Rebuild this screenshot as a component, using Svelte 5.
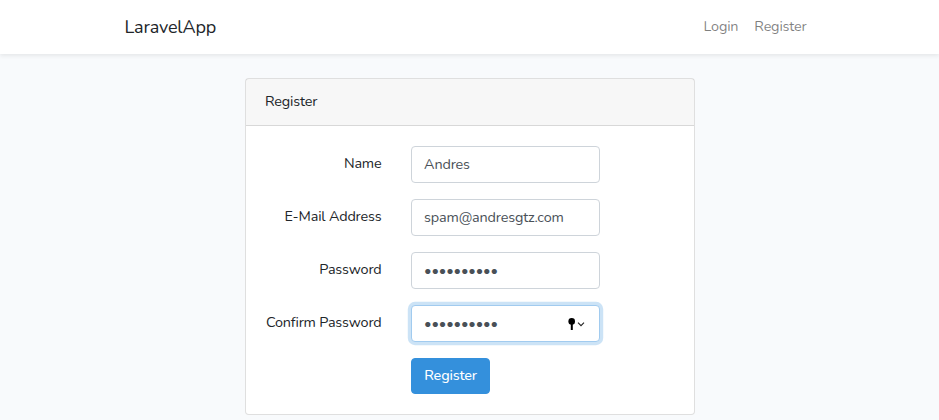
<script>
  // Register form fields
  let fields = [
    { label: "Name", type: "text", value: "Andres" },
    { label: "E-Mail Address", type: "email", value: "spam@andresgtz.com" },
    { label: "Password", type: "password", value: "secret1234" },
    { label: "Confirm Password", type: "password", value: "secret1234", focused: true }
  ];
</script>

<nav>
  <div class="container nav-inner">
    <a class="brand" href="#home">LaravelApp</a>
    <ul>
      <li><a href="#login">Login</a></li>
      <li><a href="#register">Register</a></li>
    </ul>
  </div>
</nav>

<main>
  <div class="card">
    <div class="card-header">Register</div>
    <form class="card-body" on:submit|preventDefault>
      {#each fields as field}
        <div class="row">
          <label for={field.label}>{field.label}</label>
          <div class="control">
            <input id={field.label} type={field.type} value={field.value} class:focused={field.focused} />
            {#if field.focused}
              <svg class="key" width="18" height="14" viewBox="0 0 18 14" aria-hidden="true">
                <circle cx="3.7" cy="4.4" r="3.3" fill="#000" />
                <rect x="2.8" y="6" width="2" height="7" fill="#000" />
                <path d="M10 5.7 L13 8.7 L16 5.7" fill="none" stroke="#222" stroke-width="1.1" />
              </svg>
            {/if}
          </div>
        </div>
      {/each}
      <div class="row last">
        <div class="spacer"></div>
        <button type="submit">Register</button>
      </div>
    </form>
  </div>
</main>

<style>
  :global(body) {
    background: #f8fafc;
    color: #212529;
    font-family: "Nunito", "Noto Sans", sans-serif;
    font-size: 14.4px;
    line-height: 1.6;
    letter-spacing: -0.17px;
  }

  nav {
    background: #fff;
    height: 54px;
    box-shadow: 0 2px 4px rgba(0, 0, 0, 0.075);
  }

  .container {
    width: 690px;
    margin: 0 auto;
  }

  .nav-inner {
    display: flex;
    align-items: center;
    justify-content: space-between;
    height: 100%;
  }

  .brand {
    font-size: 18px;
    color: #212529;
    text-decoration: none;
  }

  ul {
    display: flex;
    list-style: none;
    margin: 0;
    padding: 0;
  }

  ul a {
    display: block;
    padding: 8px;
    color: rgba(0, 0, 0, 0.5);
    text-decoration: none;
  }

  main {
    padding-top: 24px;
  }

  .card {
    box-sizing: border-box;
    width: 450px;
    margin: 0 auto;
    background: #fff;
    border: 1px solid rgba(0, 0, 0, 0.125);
    border-radius: 4px;
  }

  .card-header {
    padding: 11px 20px 12px 19.5px;
    background: rgba(0, 0, 0, 0.03);
    border-bottom: 1px solid rgba(0, 0, 0, 0.125);
  }

  .card-body {
    padding: 20px;
  }

  .row {
    display: flex;
    margin-bottom: 16px;
  }

  .row.last {
    margin-bottom: 0;
  }

  label {
    width: 116px;
    margin-right: 29.6px;
    padding: 6px 0 8px;
    text-align: right;
    line-height: 23px;
    white-space: nowrap;
  }

  .spacer {
    width: 145.6px;
  }

  .control {
    position: relative;
    width: 189px;
  }

  input {
    box-sizing: border-box;
    display: block;
    width: 100%;
    height: 37px;
    padding: 5px 12px 7px;
    border: 1px solid #ced4da;
    border-radius: 4px;
    background: #fff;
    color: #495057;
    font: inherit;
    letter-spacing: inherit;
    outline: none;
  }

  input.focused {
    border-color: #a1cbef;
    box-shadow: 0 0 0 3.2px rgba(52, 144, 220, 0.25);
  }

  .key {
    position: absolute;
    right: 14px;
    top: 12px;
  }

  button {
    width: 79px;
    padding: 5px 0 7px;
    border: 1px solid #3490dc;
    border-radius: 4px;
    background: #3490dc;
    color: #fff;
    font: inherit;
    font-weight: 500;
    letter-spacing: inherit;
    line-height: 22px;
  }
</style>
